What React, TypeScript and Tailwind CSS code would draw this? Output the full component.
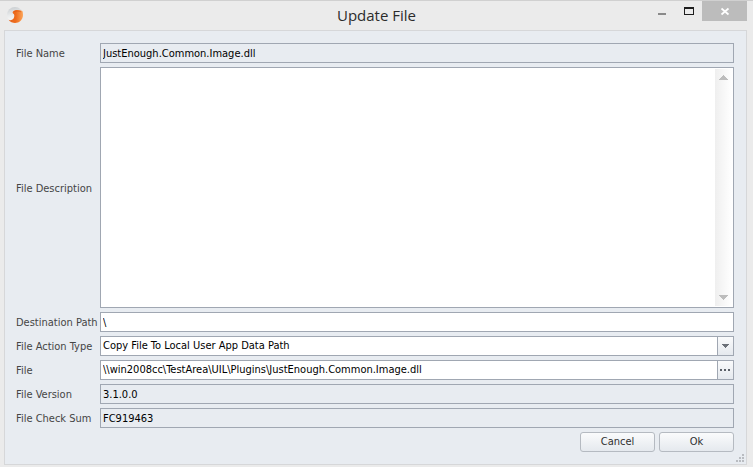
import React, { useState } from "react";

const labelClass = "self-center whitespace-nowrap pt-0.5 text-[#454545]";
const fieldClass =
  "h-5 w-full min-w-0 border border-[#a0a7b2] px-0.5 text-black outline-none";

function AppIcon() {
  return (
    <svg width="18" height="18" viewBox="0 0 18 18" aria-hidden="true">
      <defs>
        <linearGradient id="silver" x1="0.2" y1="0" x2="0.4" y2="1">
          <stop offset="0" stopColor="#c9cdd0" />
          <stop offset="0.5" stopColor="#e9ebec" />
          <stop offset="1" stopColor="#ffffff" />
        </linearGradient>
        <linearGradient id="ember" x1="0" y1="0" x2="1" y2="0">
          <stop offset="0" stopColor="#e2641f" />
          <stop offset="0.5" stopColor="#ee6c1c" />
          <stop offset="1" stopColor="#fba55a" />
        </linearGradient>
      </defs>
      <circle cx="9" cy="9" r="8" fill="url(#silver)" />
      <path
        d="M16.300 5C13.500 3.600 9 3.800 7.200 5.200C6.200 6 6.600 7.400 7.800 8C8.800 9 8.300 11.500 7.200 13C6 14.200 4.500 14.400 2.600 13.800C4.200 15.900 6.500 17 9 17C13.500 17 17 13.500 17 9C17 7.500 16.800 6 16.300 5Z"
        fill="url(#ember)"
      />
      <path d="M8 5.500C10.500 4.800 13 5 15 5.800" stroke="#d9540f" strokeOpacity="0.600" fill="none" />
    </svg>
  );
}

function TitleBar() {
  return (
    <header className="grid h-[29px] shrink-0 grid-cols-[1fr_auto_1fr] items-start pl-1.5">
      <div className="pt-[5px]">
        <AppIcon />
      </div>
      <h1 className="pt-1 font-['Open_Sans',sans-serif] text-[15px] leading-5 text-[#2b2b2b]">
        Update File
      </h1>
      <div className="flex justify-end">
        <button type="button" aria-label="Minimize" className="h-[19px] w-[27px]">
          <svg width="27" height="19" shapeRendering="crispEdges">
            <path d="M10 12h8v2h-8z" fill="#8a8a8a" />
          </svg>
        </button>
        <button type="button" aria-label="Maximize" className="h-[19px] w-[27px]">
          <svg width="27" height="19" shapeRendering="crispEdges">
            <path d="M9 6h10v8H9zM10 8v5h8V8z" fill="#1e1e1e" fillRule="evenodd" />
          </svg>
        </button>
        <button type="button" aria-label="Close" className="h-5 w-[45px] bg-[#bcbcbc]">
          <svg width="45" height="20">
            <path d="M19.500 7.500l7 6M26.500 7.500l-7 6" stroke="#fff" strokeWidth="1.700" />
          </svg>
        </button>
      </div>
    </header>
  );
}

function DialogButton({ children }: { children: React.ReactNode }) {
  return (
    <button
      type="button"
      className="h-5 w-[75px] rounded-[3px] border border-[#b5bac1] bg-linear-to-b from-[#fafbfc] to-[#e5e9ee] text-[#303030]"
    >
      {children}
    </button>
  );
}

export default function App() {
  const [description, setDescription] = useState("");
  const [destination, setDestination] = useState("\\");
  const [file, setFile] = useState(
    "\\\\win2008cc\\TestArea\\UIL\\Plugins\\JustEnough.Common.Image.dll"
  );

  return (
    <div className="flex min-h-screen flex-col border-t border-[#d0d0d0] bg-[#ebebeb] pr-1.5 pb-0.5 font-['DejaVu_Sans_Condensed','DejaVu_Sans',sans-serif] text-[11px] leading-[18px]">
      <TitleBar />
      <form className="ml-1 flex flex-1 flex-col border border-[#d6d7d9] bg-[#e8ecf1] pt-3 pl-[11px]">
        <div className="grid flex-1 grid-cols-[80px_1fr] grid-rows-[20px_minmax(120px,1fr)_repeat(5,20px)] gap-1 pr-3">
          <label htmlFor="name" className={labelClass}>File Name</label>
          <input id="name" readOnly value="JustEnough.Common.Image.dll" className={`${fieldClass} bg-[#e8ecf1]`} />

          <label htmlFor="description" className={labelClass}>File Description</label>
          <div className="flex border border-[#a0a7b2] bg-white py-px pr-px">
            <textarea
              id="description"
              value={description}
              onChange={(e) => setDescription(e.target.value)}
              className="min-w-0 flex-1 resize-none px-0.5 outline-none"
            />
            <div className="flex w-[17px] flex-col justify-between bg-linear-to-r from-[#efefef] to-white">
              <button type="button" aria-label="Scroll up" className="h-[17px]">
                <svg width="17" height="17" shapeRendering="crispEdges">
                  <path d="M4 11L8.500 6L13 11z" fill="#bdbdbd" />
                </svg>
              </button>
              <button type="button" aria-label="Scroll down" className="h-[17px]">
                <svg width="17" height="17" shapeRendering="crispEdges">
                  <path d="M4 6L8.500 11L13 6z" fill="#bdbdbd" />
                </svg>
              </button>
            </div>
          </div>

          <label htmlFor="destination" className={labelClass}>Destination Path</label>
          <input id="destination" value={destination} onChange={(e) => setDestination(e.target.value)} className={`${fieldClass} bg-white`} />

          <label htmlFor="action" className={labelClass}>File Action Type</label>
          <div className="grid">
            <select id="action" className={`${fieldClass} col-start-1 row-start-1 appearance-none bg-white`}>
              <option>Copy File To Local User App Data Path</option>
            </select>
            <span className="pointer-events-none col-start-1 row-start-1 m-px h-[18px] w-4 justify-self-end border-l border-[#a0a7b2] bg-linear-to-b from-[#fafbfc] to-[#e5e9ee]">
              <svg width="15" height="18" shapeRendering="crispEdges">
                <path d="M4 7h7v1h-1v1H9v1H8v1H7v-1H6V9H5V8H4z" fill="#6b7078" />
              </svg>
            </span>
          </div>

          <label htmlFor="file" className={labelClass}>File</label>
          <div className="flex h-5 border border-[#a0a7b2] bg-white">
            <input id="file" value={file} onChange={(e) => setFile(e.target.value)} className="min-w-0 flex-1 px-0.5 text-black outline-none" />
            <button type="button" aria-label="Browse" className="w-4 border-l border-[#a0a7b2] bg-linear-to-b from-[#fafbfc] to-[#e5e9ee]">
              <svg width="15" height="18" shapeRendering="crispEdges">
                <path d="M2 8h2v2H2zM6 8h2v2H6zM10 8h2v2h-2z" fill="#5b6068" />
              </svg>
            </button>
          </div>

          <label htmlFor="version" className={labelClass}>File Version</label>
          <input id="version" readOnly value="3.1.0.0" className={`${fieldClass} bg-[#e8ecf1]`} />

          <label htmlFor="checksum" className={labelClass}>File Check Sum</label>
          <input id="checksum" readOnly value="FC919463" className={`${fieldClass} bg-[#e8ecf1]`} />
        </div>

        <div className="flex justify-end gap-1 pt-1 pr-3">
          <DialogButton>Cancel</DialogButton>
          <DialogButton>Ok</DialogButton>
        </div>
        <div className="flex h-3 items-end justify-end pr-0.5 pb-0.5">
          <svg width="8" height="8" shapeRendering="crispEdges" fill="#b9bcc1" aria-hidden="true">
            <path d="M6 0h2v2H6zM3 3h2v2H3zM6 3h2v2H6zM0 6h2v2H0zM3 6h2v2H3zM6 6h2v2H6z" />
          </svg>
        </div>
      </form>
    </div>
  );
}
